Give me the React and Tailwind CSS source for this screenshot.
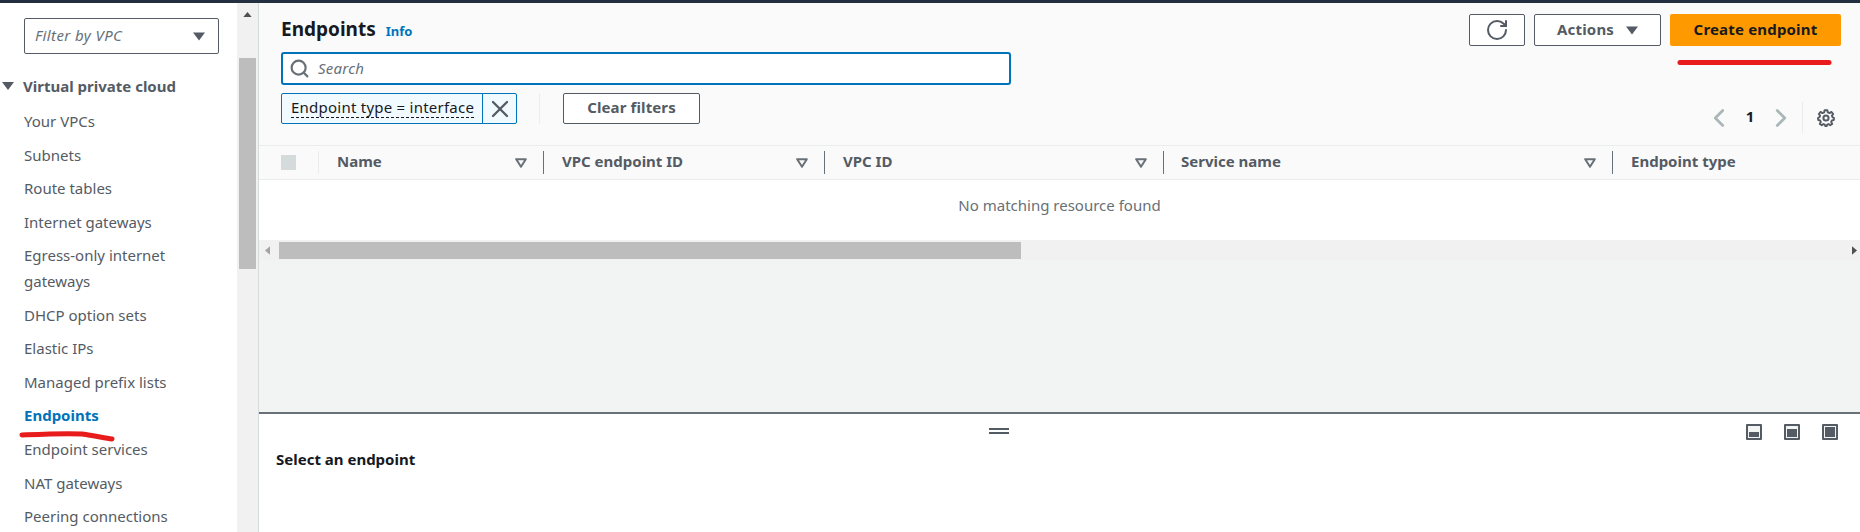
import React from "react";
import { RotateCw, Search, X, ChevronLeft, ChevronRight } from "lucide-react";

const items = [
  ["Your VPCs"],
  ["Subnets"],
  ["Route tables"],
  ["Internet gateways"],
  ["Egress-only internet gateways"],
  ["DHCP option sets"],
  ["Elastic IPs"],
  ["Managed prefix lists"],
  ["Endpoints", true],
  ["Endpoint services"],
  ["NAT gateways"],
  ["Peering connections"],
];

const columns = [
  ["Name", "w-[225px]", "pl-[18px]"],
  ["VPC endpoint ID", "w-[281px]", "pl-[18px]"],
  ["VPC ID", "w-[339px]", "pl-[18px]"],
  ["Service name", "w-[449px]", "pl-[17px]"],
];

function Tri({ className = "" }) {
  return (
    <svg viewBox="0 0 12 8" className={className}>
      <path d="M0 0H12L6 8Z" fill="currentColor" />
    </svg>
  );
}

function SortArrow() {
  return (
    <svg viewBox="0 0 12 10" className="w-[12px] h-[10px] text-[#687078]">
      <path d="M1.2 1.2H10.8L6 8.8Z" fill="none" stroke="currentColor" strokeWidth="2" strokeLinejoin="round" />
    </svg>
  );
}

function Gear() {
  return (
    <svg viewBox="0 0 18 18" className="w-[18px] h-[18px] text-[#545b64]" fill="none" stroke="currentColor">
      <circle cx="9" cy="9" r="2.6" strokeWidth="2" />
      <path
        d="M7.6 1.2H10.4L10.8 3.3L12.6 4.1L14.4 2.9L16.2 5L14.9 6.7L15.5 8.2L17 9L16.8 11L14.9 11.4L14.2 13L15.2 15L13.2 16.2L11.6 15L10.2 15.6L9.8 17H8.2L7.8 15.6L6.4 15L4.8 16.2L2.8 15L3.8 13L3.1 11.4L1.2 11L1 9L2.5 8.2L3.1 6.7L1.8 5L3.6 2.9L5.4 4.1L7.2 3.3Z"
        strokeWidth="1.9"
        strokeLinejoin="round"
      />
    </svg>
  );
}

function PanelIcon({ top }) {
  return (
    <svg viewBox="0 0 16 16" className="w-4 h-4">
      <rect x="0" y="0" width="16" height="16" rx="1" fill="#545b64" />
      <rect x="2" y="2" width="12" height="12" fill="#f2f3f3" />
      <rect x="3" y={top} width="10" height={13 - top} fill="#545b64" />
    </svg>
  );
}

export default function App() {
  return (
    <div
      className="w-[1860px] h-[532px] overflow-hidden flex flex-col bg-white text-[15px] text-[#545b64] relative"
      style={{ fontFamily: '"Noto Sans", sans-serif' }}
    >
      <div className="h-[3px] shrink-0 bg-[#232f3e]" />
      <div className="flex flex-1 min-h-0">
        <aside className="w-[237px] shrink-0 overflow-hidden">
          <div className="ml-[24px] mt-[15px] w-[195px] h-[36px] border border-[#545b64] rounded-[2px] flex items-center justify-between pl-[10px] pr-[13px]">
            <span className="italic text-[#687078] leading-none tracking-[0.4px] pb-[2px]">Filter by VPC</span>
            <Tri className="w-[12px] h-[9px] text-[#545b64]" />
          </div>
          <div className="mt-[19px] pl-[2px] flex items-center gap-[9px] h-[26px] font-bold">
            <Tri className="w-[12px] h-[8px] text-[#545b64]" />
            <span>Virtual private cloud</span>
          </div>
          <ul className="mt-[10px] pl-[24px] pr-[16px] flex flex-col gap-[8px]">
            {items.map(([label, active]) => (
              <li
                key={label}
                className={`leading-[25.6px] ${active ? "font-bold text-[#0073bb]" : ""}`}
              >
                {label}
              </li>
            ))}
          </ul>
        </aside>

        <div className="w-[21px] shrink-0 bg-[#f1f1f1] flex flex-col items-center">
          <svg viewBox="0 0 10 6" className="w-[9px] h-[5px] mt-[9px] text-[#505050]">
            <path d="M0 6L5 0L10 6Z" fill="currentColor" />
          </svg>
          <div className="w-[17px] h-[211px] mt-[41px] bg-[#bdbdbd]" />
        </div>

        <main className="flex-1 min-w-0 border-l border-[#d5dbdb] bg-[#f2f3f3] flex flex-col">
          <header className="h-[142px] shrink-0 bg-[#fafafa] pl-[22px] pr-[19px] flex justify-between">
            <div className="w-[730px]">
              <div className="flex items-baseline gap-[10px] mt-[12px] h-[28px]">
                <h1 className="text-[19px] leading-[28px] font-bold text-[#16191f]">Endpoints</h1>
                <a className="text-[13px] font-bold text-[#0073bb]">Info</a>
              </div>
              <div className="mt-[9px] h-[33px] bg-white border-2 border-[#0073bb] rounded-[3px] flex items-center pl-[6px] gap-[8px]">
                <Search className="w-[21px] h-[21px] text-[#687078]" strokeWidth={2.5} />
                <span className="italic text-[#687078] tracking-[0.25px]">Search</span>
              </div>
              <div className="mt-[8px] flex items-center">
                <div className="h-[31px] w-[236px] flex border border-[#0073bb] rounded-[2px] bg-[#f1faff] text-[#16191f]">
                  <div className="flex-1 flex items-center pl-[9px]">
                    <span className="border-b border-dashed border-[#16191f] leading-[19px] tracking-[0.24px] whitespace-nowrap mb-px">Endpoint type = interface</span>
                  </div>
                  <div className="w-[34px] border-l border-[#0073bb] flex items-center justify-center">
                    <X className="w-[28px] h-[28px] text-[#545b64] shrink-0" strokeWidth={2} />
                  </div>
                </div>
                <div className="w-px h-[31px] bg-[#eaeded] ml-[22px]" />
                <button className="ml-[23px] w-[137px] h-[31px] pb-[2px] bg-white border border-[#545b64] rounded-[2px] font-bold text-[#545b64] tracking-[0.12px]">
                  Clear filters
                </button>
              </div>
            </div>
            <div className="flex flex-col items-end">
              <div className="mt-[11px] flex gap-[9px]">
                <button className="w-[56px] h-[32px] bg-white border border-[#545b64] rounded-[2px] flex items-center justify-center">
                  <RotateCw className="w-[24px] h-[24px] text-[#545b64]" strokeWidth={2} />
                </button>
                <button className="w-[127px] h-[32px] pb-[2px] bg-white border border-[#545b64] rounded-[2px] flex items-center justify-center gap-[12px] font-bold tracking-[0.2px]">
                  Actions
                  <Tri className="w-[12px] h-[9px] text-[#545b64] mt-[2px]" />
                </button>
                <button className="w-[171px] h-[32px] pb-[2px] bg-[#ff9900] rounded-[2px] font-bold text-[#16191f] tracking-[0.18px]">
                  Create endpoint
                </button>
              </div>
              <div className="mt-[56px] h-[31px] flex items-center">
                <ChevronLeft className="w-[30px] h-[30px] text-[#aab7b8]" strokeWidth={2.2} />
                <span className="w-[32px] text-center font-bold text-[#16191f] mb-[2px]">1</span>
                <ChevronRight className="w-[30px] h-[30px] text-[#aab7b8]" strokeWidth={2.2} />
                <div className="w-px h-[31px] bg-[#eaeded] ml-[6px] mr-[14px]" />
                <Gear />
                <div className="w-[6px]" />
              </div>
            </div>
          </header>

          <div className="h-[35px] shrink-0 bg-[#fafafa] border-y border-[#eaeded] flex items-center font-bold whitespace-nowrap">
            <div className="w-[60px] h-[23px] pl-[22px] flex items-center border-r border-[#eaeded]">
              <div className="w-[15px] h-[15px] bg-[#d5dbdb]" />
            </div>
            {columns.map(([name, w, pl]) => (
              <div
                key={name}
                className={`${w} ${pl} h-[23px] flex items-center justify-between pr-[16px] border-r border-[#687078]`}
              >
                <span className="mb-[2px]">{name}</span>
                <SortArrow />
              </div>
            ))}
            <div className="pl-[18px] mb-[2px]">Endpoint type</div>
          </div>

          <div className="h-[60px] shrink-0 bg-white flex items-start justify-center pt-[13px] leading-[24px] text-[#687078]">
            No matching resource found
          </div>

          <div className="h-[20px] shrink-0 bg-[#f1f1f1] flex items-center pr-[3px]">
            <svg viewBox="0 0 6 10" className="w-[5px] h-[9px] ml-[6px] text-[#a3a3a3]">
              <path d="M6 0L0 5L6 10Z" fill="currentColor" />
            </svg>
            <div className="w-[742px] h-[17px] ml-[9px] bg-[#bdbdbd]" />
            <svg viewBox="0 0 6 10" className="w-[5px] h-[9px] ml-auto text-[#505050]">
              <path d="M0 0L6 5L0 10Z" fill="currentColor" />
            </svg>
          </div>

          <div className="flex-1 min-h-0" />

          <section className="h-[120px] shrink-0 bg-white border-t-2 border-[#687078] pl-[17px] pr-[22px]">
            <div className="flex items-center h-[30px] mt-[3px]">
              <div className="flex-1 flex justify-center pr-[24px]">
                <div className="flex flex-col gap-[2px] w-[20px] mb-[2px]">
                  <div className="h-[2px] bg-[#545b64]" />
                  <div className="h-[2px] bg-[#545b64]" />
                </div>
              </div>
              <div className="flex gap-[22px]">
                <PanelIcon top={8} />
                <PanelIcon top={5} />
                <PanelIcon top={3} />
              </div>
            </div>
            <h2 className="font-bold text-[#16191f] leading-[24px]">Select an endpoint</h2>
          </section>
        </main>
      </div>

      <svg className="absolute left-0 top-0 pointer-events-none" width="1860" height="532" viewBox="0 0 1860 532">
        <path d="M22 435C45 434 65 433 82 434C95 436 105 438 112 439" fill="none" stroke="#e81c1c" strokeWidth="5" strokeLinecap="round" />
        <path d="M1680 62.5H1829" fill="none" stroke="#e81c1c" strokeWidth="5" strokeLinecap="round" />
      </svg>
    </div>
  );
}
